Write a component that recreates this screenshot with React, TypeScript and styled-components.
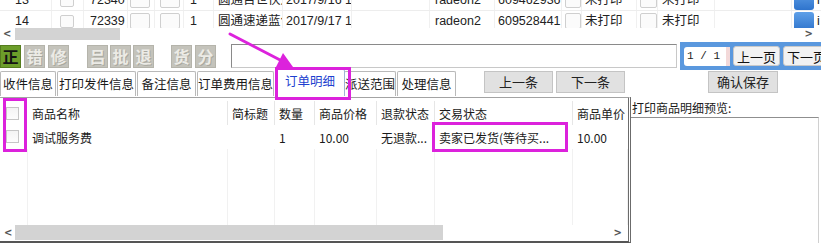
import React from "react";
import styled, { createGlobalStyle } from "styled-components";

const GlobalStyle = createGlobalStyle`
  html, body {
    margin: 0;
    padding: 0;
    background: #fff;
    overflow: hidden;
  }
  body {
    font-family: "Noto Sans CJK SC", "Noto Sans", sans-serif;
    font-size: 12px;
    color: #111;
  }
`;

const Screen = styled.div`
  position: relative;
  width: 821px;
  height: 243px;
  overflow: hidden;
  background: #fff;
  display: flex;
  flex-direction: column;
`;

/* ---------- order grid (scrolled, partly visible) ---------- */

const GridWindow = styled.div`
  height: 28px;
  overflow: hidden;
  flex: none;
`;

const GridRows = styled.div`
  margin-top: -10px;
`;

const GridRow = styled.div`
  display: flex;
  height: 20px;
  border-bottom: 1px solid #ededed;
  font-family: "Liberation Sans", "Noto Sans CJK SC", sans-serif;
  font-size: 12.5px;
  line-height: 20px;
  color: #222;
`;

const GridCell = styled.div<{ $w: number; $pl?: number }>`
  width: ${(p) => p.$w}px;
  flex: none;
  padding-left: ${(p) => p.$pl ?? 4}px;
  box-sizing: border-box;
  white-space: nowrap;
  overflow: hidden;
  display: flex;
  align-items: center;
  border-right: 1px solid #f0f0f0;
`;

const MiniBox = styled.span<{ $w?: number }>`
  display: inline-block;
  flex: none;
  width: ${(p) => p.$w ?? 12}px;
  height: ${(p) => (p.$w ? 14 : 11)}px;
  border: 1px solid #cfcfcf;
  border-radius: 2px;
  background: #fbfbfb;
`;

const BlueKey = styled.span`
  display: inline-block;
  flex: none;
  width: 20px;
  height: 19px;
  border-radius: 3px;
  background: linear-gradient(#5fa0e8, #2f74cc);
  margin-right: 3px;
`;

const HScroll = styled.div<{ $thumbFrom: number; $thumbTo: number }>`
  position: relative;
  height: 12px;
  flex: none;
  display: flex;
  align-items: center;
  justify-content: space-between;
  padding: 0 8px 0 3px;
  background: #fff;
  &::before {
    content: "";
    position: absolute;
    left: ${(p) => p.$thumbFrom}px;
    width: ${(p) => p.$thumbTo - p.$thumbFrom}px;
    top: 0;
    bottom: 0;
    background: #d3d3d3;
  }
`;

const ScrollArrow = styled.span`
  position: relative;
  font-family: "DejaVu Sans", sans-serif;
  font-size: 10px;
  font-weight: bold;
  color: #555;
  line-height: 1;
`;

/* ---------- toolbar ---------- */

const Toolbar = styled.div`
  height: 30px;
  flex: none;
  display: flex;
  align-items: center;
  padding-top: 2px;
  box-sizing: border-box;
`;

const Group = styled.div<{ $ml: number; $gap: number }>`
  display: flex;
  gap: ${(p) => p.$gap}px;
  margin-left: ${(p) => p.$ml}px;
`;

const GlyphButton = styled.div<{ $on?: boolean }>`
  width: 21px;
  height: 23px;
  display: flex;
  align-items: center;
  justify-content: center;
  font-size: 16px;
  font-weight: bold;
  line-height: 1;
  background: ${(p) => (p.$on ? "#6c9d2a" : "#c4c3bb")};
  color: ${(p) => (p.$on ? "#141414" : "#ecebe6")};
  text-shadow: ${(p) => (p.$on ? "none" : "1px 1px 0 #a9a89f")};
  border: 1px solid ${(p) => (p.$on ? "#557d1e" : "#b5b4ab")};
  box-sizing: border-box;
`;

const SearchBox = styled.div`
  margin-left: 15px;
  width: 446px;
  height: 24px;
  border: 1px solid #8a8a8a;
  border-right-color: #c8c8c8;
  border-bottom-color: #c8c8c8;
  box-sizing: border-box;
  background: #fff;
`;

const Pager = styled.div`
  margin-left: 3px;
  flex: 1;
  align-self: stretch;
  background: #5a98de;
  display: flex;
  align-items: center;
  gap: 3px;
  padding-left: 4px;
  overflow: hidden;
`;

const PageField = styled.div`
  width: 46px;
  height: 19px;
  flex: none;
  background: #fff;
  border-right: 4px solid #f3d9d9;
  border-radius: 3px 0 0 3px;
  box-sizing: border-box;
  font-family: "Liberation Mono", monospace;
  font-size: 11px;
  line-height: 19px;
  padding-left: 3px;
  color: #222;
  white-space: pre;
`;

const PageButton = styled.div`
  height: 20px;
  flex: none;
  padding: 0 3px;
  background: #f2f2f2;
  border: 1px solid #c9c9c9;
  border-radius: 3px;
  font-size: 13px;
  line-height: 19px;
  white-space: nowrap;
  box-sizing: border-box;
`;

/* ---------- tab strip ---------- */

const TabStrip = styled.div`
  height: 27px;
  flex: none;
  display: flex;
  align-items: flex-end;
  box-sizing: border-box;
  padding-bottom: 1px;
`;

const Tab = styled.div<{ $w: number; $active?: boolean }>`
  width: ${(p) => p.$w}px;
  flex: none;
  height: ${(p) => (p.$active ? 27 : 25)}px;
  margin-right: ${(p) => (p.$active ? -1 : 1)}px;
  border: 1px solid ${(p) => (p.$active ? "#9fb4d6" : "#b9b9b9")};
  border-bottom: none;
  border-radius: 2px 2px 0 0;
  background: #fff;
  color: ${(p) => (p.$active ? "#1d3fcf" : "#1a1a1a")};
  font-size: 12.5px;
  line-height: ${(p) => (p.$active ? 21 : 23)}px;
  text-align: center;
  white-space: nowrap;
  overflow: hidden;
  box-sizing: border-box;
  position: relative;
  z-index: ${(p) => (p.$active ? 1 : 0)};
`;

const StripButton = styled.div<{ $ml: number; $w: number }>`
  margin-left: ${(p) => p.$ml}px;
  width: ${(p) => p.$w}px;
  flex: none;
  height: 22px;
  align-self: flex-start;
  margin-top: 1px;
  background: #e1e1e1;
  border: 1px solid #c4c4c4;
  box-sizing: border-box;
  text-align: center;
  font-size: 13px;
  line-height: 20px;
  color: #222;
`;

/* ---------- lower body ---------- */

const Body = styled.div`
  flex: 1;
  display: flex;
  min-height: 0;
`;

const DetailTable = styled.div`
  width: 631px;
  flex: none;
  display: flex;
  flex-direction: column;
  border-top: 1px solid #a3a3a3;
  border-right: 3px double #6b6b6b;
  border-bottom: 2px solid #555;
  box-sizing: border-box;
  padding-top: 3px;
  position: relative;
`;

const COLS = "28px 200px 47px 40px 62px 58px 138px 1fr";

const TableRow = styled.div<{ $h: number }>`
  display: grid;
  grid-template-columns: ${COLS};
  height: ${(p) => p.$h}px;
  align-items: center;
`;

const HeadCell = styled.div<{ $line?: boolean }>`
  height: 100%;
  display: flex;
  align-items: center;
  padding-left: 4px;
  white-space: nowrap;
  overflow: hidden;
  font-size: 12px;
  color: #1a1a1a;
  border-right: ${(p) => (p.$line ? "1px solid #e6e6e6" : "none")};
`;

const DataCell = styled.div`
  padding-left: 4px;
  white-space: nowrap;
  overflow: hidden;
  font-size: 12px;
  color: #1a1a1a;
`;

const Check = styled.span`
  display: inline-block;
  width: 11px;
  height: 11px;
  margin-left: 2px;
  border: 1px solid #c6c6c6;
  background: linear-gradient(#f4f4f4, #fdfdfd);
`;

const Filler = styled.div`
  flex: 1;
  display: grid;
  grid-template-columns: ${COLS};
`;

const FillerCol = styled.div`
  border-right: 1px solid #f1f1f1;
`;

const BottomScroll = styled(HScroll)`
  height: 15px;
  padding: 0 6px 0 4px;
  margin-bottom: 1px;
`;

const Preview = styled.div`
  flex: 1;
  display: flex;
  flex-direction: column;
`;

const PreviewLabel = styled.div`
  height: 20px;
  padding: 2px 0 0 1px;
  box-sizing: border-box;
  font-size: 12px;
  line-height: 18px;
  color: #1a1a1a;
`;

const PreviewBox = styled.div`
  flex: 1;
  border-top: 1px solid #8f8f8f;
  border-right: 1px solid #d0d0d0;
  margin-right: 2px;
  background: #fff;
`;

/* ---------- annotations drawn over the screenshot ---------- */

const Mark = styled.div<{ $x: number; $y: number; $w: number; $h: number }>`
  position: absolute;
  left: ${(p) => p.$x}px;
  top: ${(p) => p.$y}px;
  width: ${(p) => p.$w}px;
  height: ${(p) => p.$h}px;
  border: 3px solid #dc22dc;
  box-sizing: border-box;
  pointer-events: none;
  z-index: 5;
`;

const ArrowLayer = styled.svg`
  position: absolute;
  left: 0;
  top: 0;
  z-index: 6;
  pointer-events: none;
`;

type OrderRow = {
  no: string;
  id: string;
  qty: string;
  express: string;
  date: string;
  nick: string;
  tel: string;
};

const orders: OrderRow[] = [
  { no: "13", id: "72340", qty: "1", express: "圆通百世快递", date: "2017/9/16 1", nick: "radeon2", tel: "609462936" },
  { no: "14", id: "72339", qty: "1", express: "圆通速递蓝色", date: "2017/9/17 10", nick: "radeon2", tel: "609528441" },
];

const tabs: { label: string; w: number; active?: boolean }[] = [
  { label: "收件信息", w: 56 },
  { label: "打印发件信息", w: 79 },
  { label: "备注信息", w: 59 },
  { label: "订单费用信息", w: 77 },
  { label: "订单明细", w: 70, active: true },
  { label: "派送范围", w: 52 },
  { label: "处理信息", w: 59 },
];

const columns = ["", "商品名称", "简标题", "数量", "商品价格", "退款状态", "交易状态", "商品单价"];
const item = ["", "调试服务费", "", "1", "10.00", "无退款...", "卖家已发货(等待买...", "10.00"];

export default function App() {
  return (
    <Screen>
      <GlobalStyle />

      <GridWindow>
        <GridRows>
          {orders.map((o) => (
            <GridRow key={o.no}>
              <GridCell $w={52} $pl={15}>{o.no}</GridCell>
              <GridCell $w={32} $pl={8}><MiniBox /></GridCell>
              <GridCell $w={44} $pl={6}>{o.id}</GridCell>
              <GridCell $w={27} $pl={2}><MiniBox $w={18} /></GridCell>
              <GridCell $w={29} $pl={5}><MiniBox $w={18} /></GridCell>
              <GridCell $w={30} $pl={6}>{o.qty}</GridCell>
              <GridCell $w={69} $pl={4}>{o.express}</GridCell>
              <GridCell $w={69} $pl={3}>{o.date}</GridCell>
              <GridCell $w={78} />
              <GridCell $w={65} $pl={5}>{o.nick}</GridCell>
              <GridCell $w={67} $pl={3}>{o.tel}</GridCell>
              <GridCell $w={20} $pl={3}><MiniBox $w={14} /></GridCell>
              <GridCell $w={55} $pl={3}>未打印</GridCell>
              <GridCell $w={21} $pl={3}><MiniBox $w={15} /></GridCell>
              <GridCell $w={57} $pl={4}>未打印</GridCell>
              <GridCell $w={77} />
              <GridCell $w={31} $pl={2}><BlueKey />i</GridCell>
            </GridRow>
          ))}
        </GridRows>
      </GridWindow>
      <HScroll $thumbFrom={15} $thumbTo={120}>
        <ScrollArrow>&lt;</ScrollArrow>
        <ScrollArrow>&gt;</ScrollArrow>
      </HScroll>

      <Toolbar>
        <Group $ml={0} $gap={3}>
          <GlyphButton $on>正</GlyphButton>
          <GlyphButton>错</GlyphButton>
          <GlyphButton>修</GlyphButton>
        </Group>
        <Group $ml={18} $gap={2}>
          <GlyphButton>吕</GlyphButton>
          <GlyphButton>批</GlyphButton>
          <GlyphButton>退</GlyphButton>
        </Group>
        <Group $ml={17} $gap={3}>
          <GlyphButton>货</GlyphButton>
          <GlyphButton>分</GlyphButton>
        </Group>
        <SearchBox />
        <Pager>
          <PageField>1 / 1</PageField>
          <PageButton>上一页</PageButton>
          <PageButton>下一页</PageButton>
        </Pager>
      </Toolbar>

      <TabStrip>
        {tabs.map((t) => (
          <Tab key={t.label} $w={t.w} $active={t.active}>
            {t.label}
          </Tab>
        ))}
        <StripButton $ml={27} $w={69}>上一条</StripButton>
        <StripButton $ml={3} $w={69}>下一条</StripButton>
        <StripButton $ml={83} $w={70}>确认保存</StripButton>
      </TabStrip>

      <Body>
        <DetailTable>
          <TableRow $h={24}>
            {columns.map((c, i) => (
              <HeadCell key={i} $line={i > 0 && i < columns.length - 1}>
                {i === 0 ? <Check /> : c}
              </HeadCell>
            ))}
          </TableRow>
          <TableRow $h={24}>
            {item.map((c, i) => (
              <DataCell key={i}>{i === 0 ? <Check /> : c}</DataCell>
            ))}
          </TableRow>
          <Filler>
            {columns.map((_, i) => (
              <FillerCol key={i} />
            ))}
          </Filler>
          <BottomScroll $thumbFrom={15} $thumbTo={443}>
            <ScrollArrow>&lt;</ScrollArrow>
            <ScrollArrow>&gt;</ScrollArrow>
          </BottomScroll>
        </DetailTable>

        <Preview>
          <PreviewLabel>打印商品明细预览:</PreviewLabel>
          <PreviewBox />
        </Preview>
      </Body>

      <Mark $x={275} $y={67} $w={76} $h={33} />
      <Mark $x={3} $y={98} $w={24} $h={54} />
      <Mark $x={432} $y={122} $w={136} $h={30} />

      <ArrowLayer width={821} height={243} viewBox="0 0 821 243">
        <line x1={230} y1={34} x2={282} y2={61} stroke="#dc22dc" strokeWidth={3} strokeLinecap="round" />
        <polygon points="293,67 276,67 283,53" fill="#dc22dc" />
      </ArrowLayer>
    </Screen>
  );
}
